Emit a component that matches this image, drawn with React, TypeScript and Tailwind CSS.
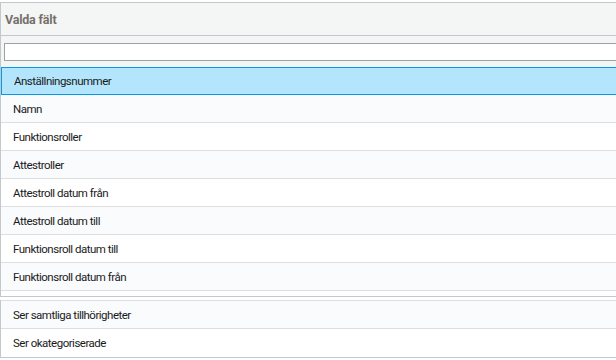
import React from "react";

// ── Data ────────────────────────────────────────────────────────────────────

const FALT = [
  "Namn",
  "Funktionsroller",
  "Attestroller",
  "Attestroll datum från",
  "Attestroll datum till",
  "Funktionsroll datum till",
  "Funktionsroll datum från",
];

const EXTRA = ["Ser samtliga tillhörigheter", "Ser okategoriserade"];

function Row({ text, light }: { text: string; light: boolean }) {
  return (
    <div
      className={
        "h-[28px] flex items-center pl-[12px] pt-[2px] border-b border-[#dcdfe1] " +
        (light ? "bg-[#f9fbfd]" : "bg-white")
      }
    >
      {text}
    </div>
  );
}

export default function App() {
  return (
    <div
      className="w-[616px] h-[360px] bg-white pt-[2px] text-[11.5px] tracking-[-0.5px] text-[#1a1a1a] overflow-hidden"
      style={{ fontFamily: "Roboto, 'Liberation Sans', sans-serif" }}
    >
      {/* Rubrik */}
      <div className="h-[34px] flex items-center pl-[4px] pt-[2px] bg-[#f4f5f5] border-t border-b border-l border-[#c2c8cc] text-[12.5px] font-bold tracking-[-0.2px] text-[#76706a]">
        Valda fält
      </div>

      {/* Filter */}
      <div className="bg-[#f4f5f5] border-l border-[#c2c8cc] pt-[7px] pb-[6px] pl-[3px]">
        <input className="block w-[640px] h-[18px] bg-white border border-[#9aa4a6] outline-none" />
      </div>

      {/* Lista */}
      <div className="h-[230px] border-l border-b border-[#c2c8cc] overflow-hidden">
        <div className="h-[28px] flex items-center pl-[12px] pt-[2px] bg-[#b3e5fc] border-t border-b border-l border-[#039be5]">
          Anställningsnummer
        </div>
        {FALT.map((f, i) => (
          <Row key={f} text={f} light={i % 2 === 0} />
        ))}
      </div>

      <div className="h-[3px]" />

      <div className="border-l border-b border-[#c2c8cc]">
        <div className="border-t border-[#dcdfe1]">
          {EXTRA.map((f, i) => (
            <div
              key={f}
              className={
                "h-[28px] flex items-center pl-[12px] pt-[2px] " +
                (i === 0 ? "bg-[#f9fbfd] border-b border-[#dcdfe1]" : "bg-white")
              }
            >
              {f}
            </div>
          ))}
        </div>
      </div>
    </div>
  );
}
